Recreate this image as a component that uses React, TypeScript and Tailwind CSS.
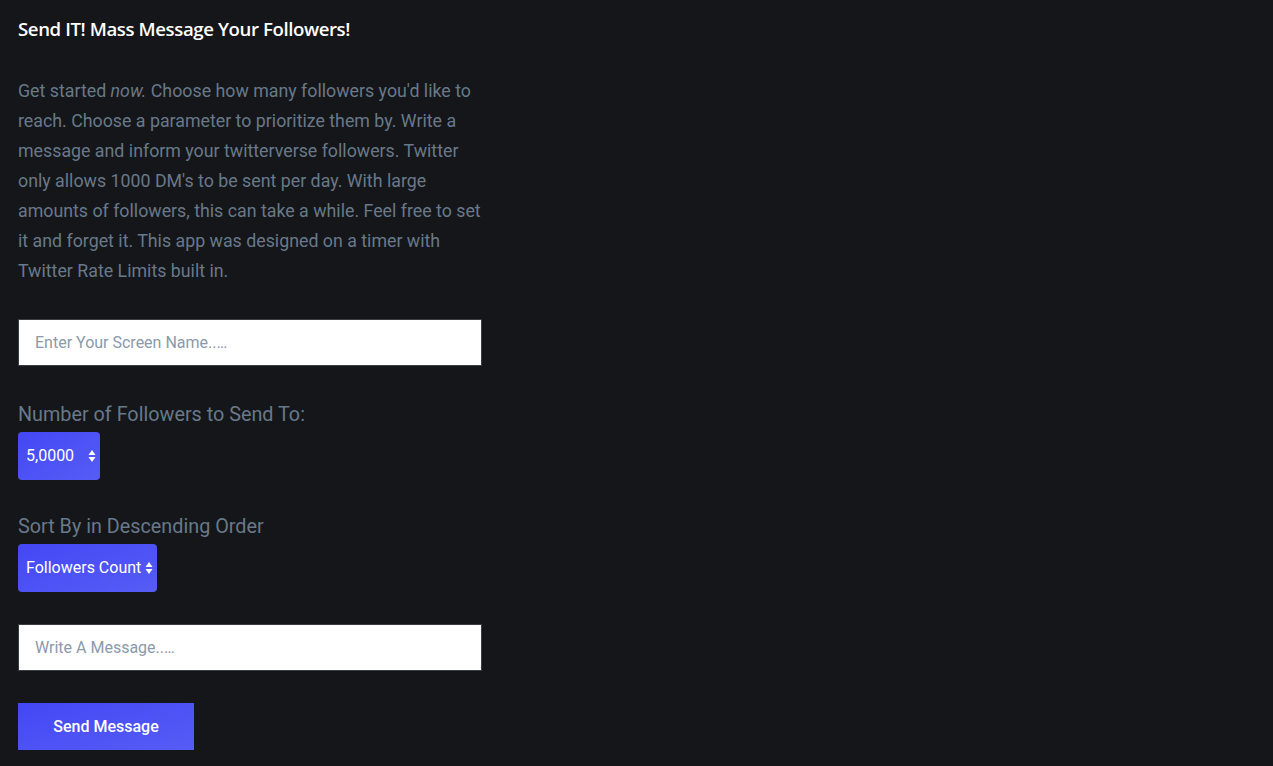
import React from 'react'

function Arrows() {
  return (
    <svg width="8" height="14" viewBox="0 0 8 14" className="shrink-0">
      <path d="M4 1 L7.5 6 H0.5 Z" fill="white" />
      <path d="M4 13 L7.5 8 H0.5 Z" fill="white" />
    </svg>
  )
}

export default function App() {
  return (
    <div className="min-h-screen bg-[#151619] px-[18px] pt-[17px] font-['Roboto',sans-serif]">
      <div className="w-[464px]">
        {/* heading */}
        <h1 className="text-[18.6px] font-semibold leading-6 text-white font-['Open_Sans',sans-serif] tracking-[-0.4px]">
          Send IT! Mass Message Your Followers!
        </h1>

        <p className="mt-[35px] text-[17.8px] leading-[30px] text-[#68798a]">
          Get started <em>now.</em> Choose how many followers you'd like to reach. Choose a
          parameter to prioritize them by. Write a message and inform your twitterverse
          followers. Twitter only allows 1000 DM's to be sent per day. With large amounts of
          followers, this can take a while. Feel free to set it and forget it. This app was
          designed on a timer with Twitter Rate Limits built in.
        </p>

        {/* screen name */}
        <input
          className="mt-[33px] block h-[47px] w-full border border-[#3a3d42] bg-white px-4 text-[16px] text-gray-700 outline-none placeholder:text-[#8a9aab]"
          placeholder="Enter Your Screen Name..…"
        />

        <div className="mt-[37px] text-[19.8px] leading-6 text-[#68798a]">
          Number of Followers to Send To:
        </div>
        <div className="mt-[5px] flex h-12 w-[82px] items-center justify-between rounded bg-gradient-to-br from-[#4347f5] to-[#565cf4] pl-2 pr-[4px] text-[16px] text-white">
          5,0000
          <Arrows />
        </div>

        <div className="mt-[35px] text-[19.8px] leading-6 text-[#68798a]">
          Sort By in Descending Order
        </div>
        <div className="mt-[5px] flex h-12 w-[139px] items-center justify-between rounded bg-gradient-to-br from-[#4347f5] to-[#565cf4] pl-2 pr-[4px] text-[16px] text-white">
          Followers Count
          <Arrows />
        </div>

        <input
          className="mt-[32px] block h-[47px] w-full border border-[#3a3d42] bg-white px-4 text-[16px] text-gray-700 outline-none placeholder:text-[#8a9aab]"
          placeholder="Write A Message..…"
        />

        <button className="mt-8 h-[47px] w-[176px] bg-gradient-to-br from-[#4347f5] to-[#565cf4] text-[16px] font-medium text-white">
          Send Message
        </button>
      </div>
    </div>
  )
}
